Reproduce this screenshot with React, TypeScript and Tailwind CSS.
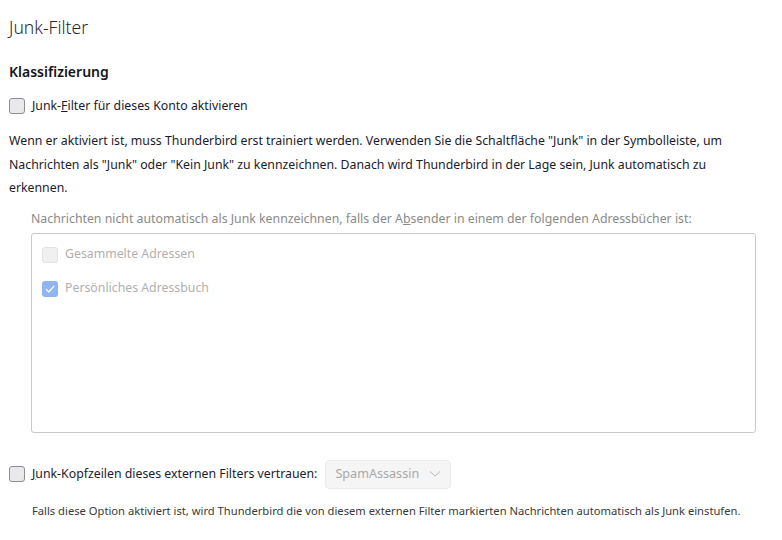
import React from "react";

function Box({ checked = false, disabled = false }: { checked?: boolean; disabled?: boolean }) {
  if (checked) {
    return (
      <span className="flex h-4 w-4 shrink-0 items-center justify-center rounded-[3px] bg-[#8fb5f3]">
        <svg width="12" height="12" viewBox="0 0 12 12" fill="none">
          <path d="M2 6.2 L4.8 9 L10.2 2.8" stroke="white" strokeWidth="1.2" />
        </svg>
      </span>
    );
  }
  return (
    <span
      className={
        disabled
          ? "block h-4 w-4 shrink-0 rounded-[3px] border border-[#e2e2e2] bg-[#f0f0f0]"
          : "block h-4 w-4 shrink-0 rounded-[3px] border border-[#8f8f8f] bg-[#e9e9ed]"
      }
    />
  );
}

export default function App() {
  return (
    <div className="min-h-[540px] w-[782px] bg-white pl-[9px] text-[12.3px] text-[#1a1a2e]" style={{ fontFamily: '"Noto Sans", sans-serif' }}>
      <div className="pt-[15px] text-[17.5px] font-light leading-[24px] text-[#2b2a33]">Junk-Filter</div>
      <div className="mt-[23px] text-[14px] font-semibold leading-[20px] text-[#15141a]">Klassifizierung</div>
      <label className="mt-[15px] flex h-[18px] items-center gap-[7px]">
        <Box />
        <span>
          Junk-<span className="underline">F</span>ilter für dieses Konto aktivieren
        </span>
      </label>
      <p className="mt-[14px] whitespace-nowrap leading-[23.5px]">
        Wenn er aktiviert ist, muss Thunderbird erst trainiert werden. Verwenden Sie die Schaltfläche "Junk" in der Symbolleiste, um
        <br />
        Nachrichten als "Junk" oder "Kein Junk" zu kennzeichnen. Danach wird Thunderbird in der Lage sein, Junk automatisch zu
        <br />
        erkennen.
      </p>
      <div className="ml-[22px] mr-[26px] mt-[9px]">
        <div className="whitespace-nowrap leading-[20px] text-[#8a8a8a]">
          Nachrichten nicht automatisch als Junk kennzeichnen, falls der A<span className="underline">b</span>sender in einem der folgenden Adressbücher ist:
        </div>
        <div className="mt-[4px] h-[200px] rounded-[3px] border border-[#c8c8c8] px-[10px] pt-[12px]">
          <div className="flex h-[18px] items-center gap-[7px] text-[#b0b0b0]">
            <Box disabled />
            <span>Gesammelte Adressen</span>
          </div>
          <div className="mt-[16px] flex h-[18px] items-center gap-[7px] text-[#b0b0b0]">
            <Box checked disabled />
            <span>Persönliches Adressbuch</span>
          </div>
        </div>
      </div>
      <div className="mt-[27px] flex items-center">
        <Box />
        <span className="ml-[7px]">
          <span className="underline">J</span>unk-Kopfzeilen dieses externen Filters vertrauen:
        </span>
        <div className="ml-[8px] flex h-[29px] w-[126px] items-center rounded-[4px] border border-[#ececec] bg-[#f5f5f5] pl-[9px] text-[12.6px] text-[#a8a8a8]">
          <span className="whitespace-nowrap">SpamAssassin</span>
          <svg className="ml-[10px] shrink-0" width="12" height="8" viewBox="0 0 12 8" fill="none">
            <path d="M1 1.5 L6 6 L11 1.5" stroke="#b8b8b8" strokeWidth="1" />
          </svg>
        </div>
      </div>
      <div className="ml-[23px] mt-[12px] whitespace-nowrap text-[11.2px] leading-[20px] text-[#3a3a3a]">
        Falls diese Option aktiviert ist, wird Thunderbird die von diesem externen Filter markierten Nachrichten automatisch als Junk einstufen.
      </div>
    </div>
  );
}
